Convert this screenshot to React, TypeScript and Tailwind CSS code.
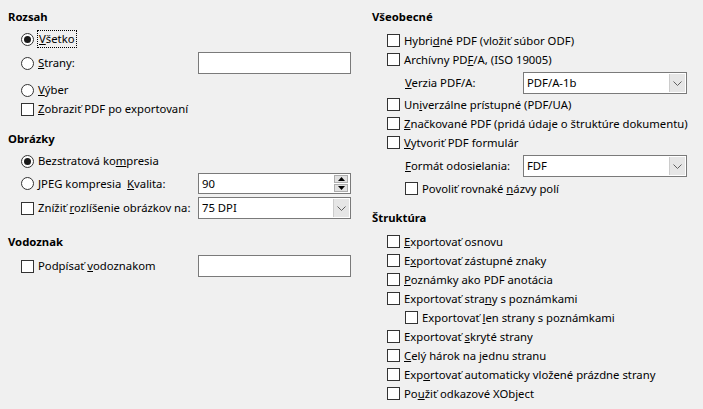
import React from 'react';

const Radio = ({ checked }: { checked?: boolean }) => (
  <span className="flex h-[13px] w-[13px] shrink-0 items-center justify-center rounded-full border border-[#333333] bg-white">
    {checked && <span className="h-[7px] w-[7px] rounded-full bg-[#1a1a1a]" />}
  </span>
);

const Checkbox = () => (
  <span className="block h-[13px] w-[13px] shrink-0 border border-[#333333] bg-white" />
);

const Heading = ({ children, className = '' }: { children: React.ReactNode; className?: string }) => (
  <div className={`flex h-4 items-center font-bold ${className}`}>{children}</div>
);

const TextBox = ({ value = '', h = 'h-[22px]' }: { value?: string; h?: string }) => (
  <div className={`flex ${h} w-[153px] shrink-0 items-center border border-[#7a7a7a] bg-white px-[3px]`}>{value}</div>
);

const Chevron = () => (
  <svg width="9" height="5" viewBox="0 0 9 5" className="text-[#606060]">
    <path d="M0.5 0.5 L4.5 4.5 L8.5 0.5" fill="none" stroke="currentColor" strokeWidth="1" />
  </svg>
);

const Dropdown = ({ value, w }: { value: string; w: string }) => (
  <div className={`flex h-[22px] ${w} shrink-0 items-stretch border border-[#7a7a7a] bg-white`}>
    <div className="flex flex-1 items-center px-[3px]">{value}</div>
    <div className="my-px mr-px flex w-[16px] items-center justify-center border-l border-[#cccccc] bg-[#e6e6e6]">
      <Chevron />
    </div>
  </div>
);

const Spin = ({ value }: { value: string }) => (
  <div className="flex h-[21px] w-[153px] shrink-0 items-stretch border border-[#7a7a7a] bg-white">
    <div className="flex flex-1 items-center px-[3px]">{value}</div>
    <div className="my-px mr-[2px] flex w-[14px] flex-col gap-px">
      <div className="flex flex-1 items-center justify-center border border-[#adadad] bg-[#e1e1e1]">
        <svg width="7" height="4" viewBox="0 0 7 4"><path d="M0 4 L3.5 0 L7 4 Z" fill="#000" /></svg>
      </div>
      <div className="flex flex-1 items-center justify-center border border-[#adadad] bg-[#e1e1e1]">
        <svg width="7" height="4" viewBox="0 0 7 4"><path d="M0 0 L3.5 4 L7 0 Z" fill="#000" /></svg>
      </div>
    </div>
  </div>
);

const CheckRow = ({ children, className = '' }: { children: React.ReactNode; className?: string }) => (
  <div className={`flex h-[19px] items-center gap-[4px] ${className}`}>
    <Checkbox />
    <span className="whitespace-nowrap">{children}</span>
  </div>
);

const App = () => {
  return (
    <div
      className="flex h-[409px] w-[703px] overflow-hidden bg-[#f0f0f0] text-[11.3px] leading-4 text-black"
      style={{ fontFamily: '"Noto Sans", "Open Sans", sans-serif' }}
    >
      {/* Left column */}
      <div className="flex w-[360px] flex-col pl-2 pt-[9px]">
        <Heading>Rozsah</Heading>
        <div className="ml-[13px] mt-[5px] flex h-[18px] items-center gap-[3px]">
          <Radio checked />
          <span className="border border-dotted border-black px-px"><u>V</u>šetko</span>
        </div>
        <div className="ml-[13px] mt-[4px] flex h-[22px] w-[330px] items-center gap-[4px]">
          <Radio />
          <span className="flex-1"><u>S</u>trany:</span>
          <TextBox />
        </div>
        <div className="ml-[13px] mt-[7px] flex h-[18px] items-center gap-[4px]">
          <Radio />
          <span><u>V</u>ýber</span>
        </div>
        <div className="ml-[13px] mt-px flex h-[18px] items-center gap-[4px]">
          <Checkbox />
          <span><u>Z</u>obraziť PDF po exportovaní</span>
        </div>

        <Heading className="mt-[13px]">Obrázky</Heading>
        <div className="ml-[13px] mt-[5px] flex h-[18px] items-center gap-[4px]">
          <Radio checked />
          <span>Bezstratová ko<u>m</u>presia</span>
        </div>
        <div className="ml-[13px] mt-[3px] flex h-[21px] w-[330px] items-center gap-[4px]">
          <Radio />
          <span className="flex-1 whitespace-nowrap"><u>J</u>PEG kompresia&nbsp;&nbsp;<u>K</u>valita:</span>
          <Spin value="90" />
        </div>
        <div className="ml-[13px] mt-[3px] flex h-[22px] w-[330px] items-center gap-[4px]">
          <Checkbox />
          <span className="flex-1 whitespace-nowrap">Znížiť <u>r</u>ozlíšenie obrázkov na:</span>
          <Dropdown value="75 DPI" w="w-[153px]" />
        </div>

        <Heading className="mt-[15px]">Vodoznak</Heading>
        <div className="ml-[13px] mt-[5px] flex h-[22px] w-[330px] items-center gap-[4px]">
          <Checkbox />
          <span className="flex-1 whitespace-nowrap">Podpísať <u>v</u>odoznakom</span>
          <TextBox />
        </div>
      </div>

      {/* Right column */}
      <div className="flex flex-1 flex-col pl-3 pt-[9px]">
        <Heading>Všeobecné</Heading>
        <div className="ml-[15px] mt-[6px]">
          <CheckRow>Hybri<u>d</u>né PDF (vložiť súbor ODF)</CheckRow>
          <CheckRow>Archívny PD<u>F</u>/A, (ISO 19005)</CheckRow>
        </div>
        <div className="ml-[33px] mt-[3px] flex h-[22px] items-center">
          <span className="w-[118px]"><u>V</u>erzia PDF/A:</span>
          <Dropdown value="PDF/A-1b" w="w-[164px]" />
        </div>
        <div className="ml-[15px] mt-px">
          <CheckRow>Un<u>i</u>verzálne prístupné (PDF/UA)</CheckRow>
          <CheckRow><u>Z</u>načkované PDF (pridá údaje o štruktúre dokumentu)</CheckRow>
          <CheckRow><u>V</u>ytvoriť PDF formulár</CheckRow>
        </div>
        <div className="ml-[33px] mt-[3px] flex h-[22px] items-center">
          <span className="w-[118px]"><u>F</u>ormát odosielania:</span>
          <Dropdown value="FDF" w="w-[164px]" />
        </div>
        <CheckRow className="ml-[33px] mt-[2px]">Povoliť rovnaké <u>n</u>ázvy polí</CheckRow>

        <Heading className="mt-[12px]">Štruktúra</Heading>
        <div className="ml-[15px] mt-[6px]">
          <CheckRow><u>E</u>xportovať osnovu</CheckRow>
          <CheckRow>E<u>x</u>portovať zástupné znaky</CheckRow>
          <CheckRow><u>P</u>oznámky ako PDF anotácia</CheckRow>
          <CheckRow>Exportovať stra<u>n</u>y s poznámkami</CheckRow>
          <CheckRow className="ml-[18px]">Exportovať <u>l</u>en strany s poznámkami</CheckRow>
          <CheckRow>Exportovať <u>s</u>kryté strany</CheckRow>
          <CheckRow><u>C</u>elý hárok na jednu stranu</CheckRow>
          <CheckRow>Exp<u>o</u>rtovať automaticky vložené prázdne strany</CheckRow>
          <CheckRow>Po<u>u</u>žiť odkazové XObject</CheckRow>
        </div>
      </div>
    </div>
  );
};

export default App;
